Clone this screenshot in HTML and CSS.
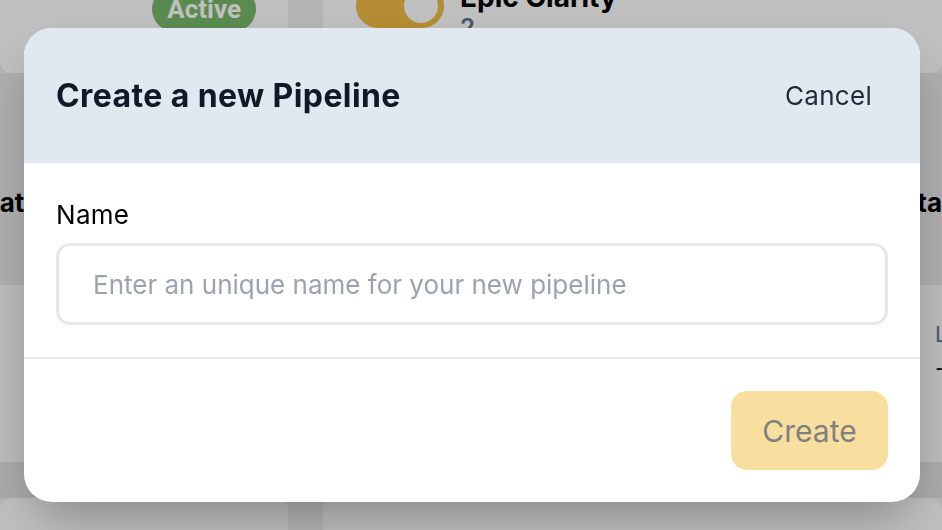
FILE: index.html
```html
<!DOCTYPE html>
<html lang="en">
<head>
  <meta charset="UTF-8" />
  <meta name="viewport" content="width=device-width, initial-scale=1.0"/>
  <title>Create a new Pipeline</title>
  <link rel="stylesheet" href="styles.css">
</head>
<body>
  <main class="page">
    <div class="card-row top-row">
      <div class="card card-status">
        <span class="badge">Active</span>
      </div>
      <div class="card card-pipeline">
        <span class="toggle"><span class="knob"></span></span>
        <div class="card-text">
          <strong>Epic Clarity</strong>
          <span class="count">2</span>
        </div>
      </div>
    </div>

    <div class="table-head">
      <span class="col-title col-left">Data</span>
      <span class="col-title col-right">Data</span>
    </div>

    <div class="table-body">
      <div class="meta">
        <span class="meta-label">Last run</span>
        <span class="meta-value">-</span>
      </div>
    </div>

    <div class="table-foot"></div>

    <div class="card-row bottom-row">
      <div class="card"></div>
      <div class="card"></div>
    </div>
  </main>

  <div class="overlay">
    <div class="modal">
      <div class="modal-header">
        <h2>Create a new Pipeline</h2>
        <button class="btn-cancel">Cancel</button>
      </div>

      <div class="modal-body">
        <label for="pipelineName">Name</label>
        <input type="text" id="pipelineName" placeholder="Enter an unique name for your new pipeline" />
      </div>

      <div class="modal-footer">
        <button class="btn-create" disabled>Create</button>
      </div>
    </div>
  </div>
</body>
</html>
```

FILE: styles.css
```css
body {
  font-family: 'Inter', 'Roboto', sans-serif;
  background: #f0f0f0;
  margin: 0;
  overflow: hidden;
  height: 530px;
}

/* page behind the dialog */

.page {
  display: flex;
  flex-direction: column;
  height: 530px;
  overflow: hidden;
}

.card-row {
  display: flex;
  gap: 35px;
  flex-shrink: 0;
}

.card {
  background: #fff;
  border-radius: 12px;
}

.top-row {
  margin-top: -40px;
  height: 113px;
}

.top-row .card {
  border-top-left-radius: 0;
  border-top-right-radius: 0;
}

.card-status {
  width: 288px;
  display: flex;
  justify-content: flex-end;
  align-items: flex-start;
  padding: 26px 32px 0 0;
  box-sizing: border-box;
}

.badge {
  font-family: 'Roboto', sans-serif;
  background: #78b96b;
  color: #fff;
  font-weight: 700;
  font-size: 26px;
  line-height: 46px;
  padding: 0 15px;
  border-radius: 23px;
}

.card-pipeline {
  flex: 1;
  display: flex;
  align-items: flex-start;
  gap: 16px;
  padding: 24px 0 0 33px;
}

.toggle {
  width: 88px;
  height: 44px;
  border-radius: 22px;
  background: #f1bb44;
  display: flex;
  align-items: center;
  justify-content: flex-end;
  padding: 0 6px;
  box-sizing: border-box;
}

.knob {
  width: 34px;
  height: 34px;
  border-radius: 50%;
  background: #fff;
}

.card-text {
  display: flex;
  flex-direction: column;
  margin-top: -2px;
}

.card-text strong {
  font-size: 28px;
  line-height: 30px;
  color: #000;
}

.count {
  font-size: 24px;
  line-height: 32px;
  font-weight: 600;
  color: #64748b;
}

.table-head {
  height: 212px;
  flex-shrink: 0;
  background: #e8e8e8;
  display: flex;
  justify-content: space-between;
  align-items: flex-start;
  padding-top: 113px;
  box-sizing: border-box;
}

.col-title {
  font-size: 26px;
  font-weight: 700;
  color: #000;
  line-height: 34px;
}

.col-left {
  margin-left: -19px;
}

.col-right {
  margin-right: 0;
}

.table-body {
  height: 177px;
  flex-shrink: 0;
  background: #fafafa;
  display: flex;
  justify-content: flex-end;
  padding-top: 36px;
  box-sizing: border-box;
}

.meta {
  width: 7px;
  display: flex;
  flex-direction: column;
  gap: 8px;
  white-space: nowrap;
}

.meta-label {
  font-size: 22px;
  color: #64748b;
}

.meta-value {
  font-size: 22px;
  color: #111;
}

.table-foot {
  height: 36px;
  flex-shrink: 0;
  background: #e3e3e3;
}

.bottom-row {
  height: 80px;
}

.bottom-row .card:first-child {
  width: 288px;
}

.bottom-row .card:last-child {
  flex: 1;
}

/* dialog */

.overlay {
  position: fixed;
  inset: 0;
  background: rgba(0, 0, 0, 0.25);
  display: flex;
  align-items: center;
  padding-left: 24px;
}

.modal {
  width: 896px;
  background: #fff;
  border-radius: 28px;
  overflow: hidden;
  box-shadow: 0 25px 50px -12px rgba(0, 0, 0, 0.3);
}

.modal-header {
  height: 135px;
  background: #e2e8f0;
  display: flex;
  justify-content: space-between;
  align-items: center;
  padding: 0 48px 0 32px;
}

.modal-header h2 {
  margin: 0;
  font-size: 32px;
  font-weight: 700;
  letter-spacing: 0.4px;
  color: #111827;
}

.btn-cancel {
  border: none;
  background: none;
  padding: 0;
  font-family: inherit;
  font-size: 26px;
  letter-spacing: 0.3px;
  color: #1f2937;
  cursor: pointer;
}

.modal-body {
  padding: 37px 32px 32px;
  display: flex;
  flex-direction: column;
  gap: 13px;
  border-bottom: 2px solid #e5e7eb;
}

.modal-body label {
  font-size: 26px;
  line-height: 30px;
  letter-spacing: 0.3px;
  color: #000;
}

.modal-body input {
  height: 82px;
  box-sizing: border-box;
  border: 3px solid #e5e7eb;
  border-radius: 14px;
  padding: 0 34px;
  font-family: inherit;
  font-size: 26px;
  outline: none;
}

.modal-body input::placeholder {
  color: #9ca3af;
}

.modal-footer {
  padding: 32px;
  display: flex;
  justify-content: flex-end;
}

.btn-create {
  width: 157px;
  height: 79px;
  border: none;
  border-radius: 16px;
  background: #f8df9f;
  color: #808080;
  font-family: inherit;
  font-size: 30px;
}
```
